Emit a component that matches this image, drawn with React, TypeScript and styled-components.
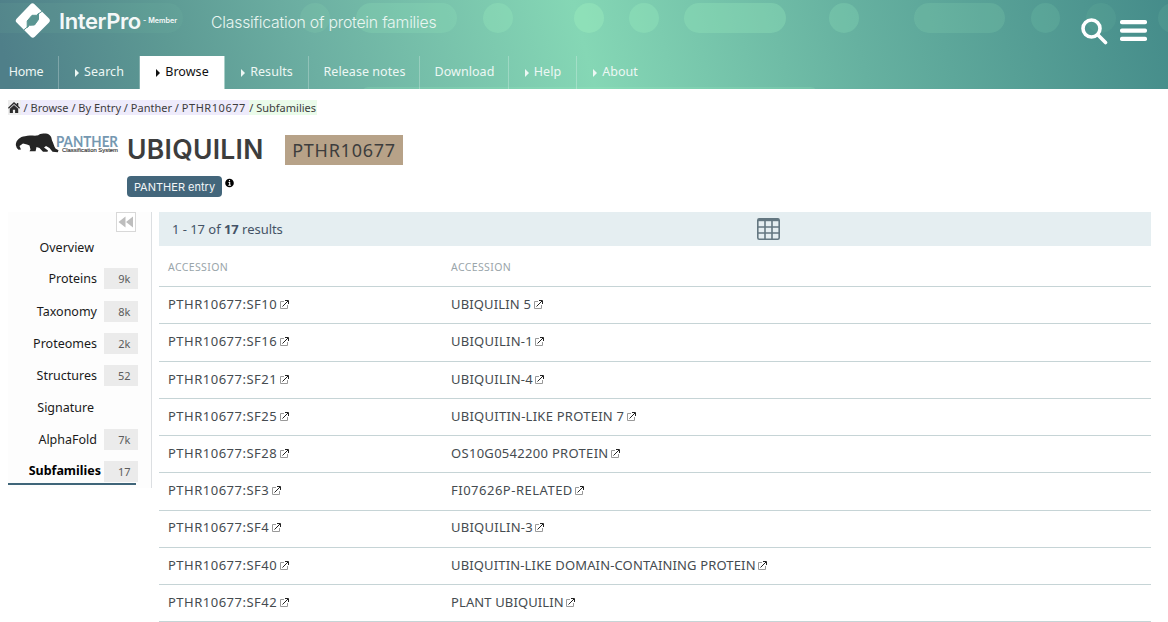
import React from "react";
import styled, { createGlobalStyle } from "styled-components";

const plex = `"Noto Sans", Roboto, sans-serif`;
const inter = `Inter, "Liberation Sans", sans-serif`;

const GlobalStyle = createGlobalStyle`
  * { box-sizing: border-box; }
  body { margin: 0; background: #fff; font-family: ${plex}; font-size: 13px; color: #3d3d3d; overflow: hidden; }
`;

const Page = styled.div`
  width: 1168px;
  height: 622px;
  overflow: hidden;
`;

const Header = styled.header`
  position: relative;
  height: 89px;
  overflow: hidden;
  display: flex;
  flex-direction: column;
  justify-content: space-between;
  background: linear-gradient(76deg, #4f7f89 1%, #5d9a94 15%, #6cafa2 27%, #85d7b5 50%, #66b1a0 73%, #458c8a 100%);
`;

const Pattern = styled.svg`
  position: absolute;
  inset: 0;
`;

const Banner = styled.div`
  position: relative;
  display: flex;
  align-items: flex-start;
  height: 56px;
  padding: 3px 21px 0 15px;
`;

const BrandName = styled.span`
  margin: 2px 0 0 8px;
  width: 84px;
  font: 600 22px/32px ${inter};
  letter-spacing: -0.4px;
  color: #f4f8f8;
`;

const BrandNote = styled.span`
  margin-top: 12px;
  width: 68px;
  font: 600 7.2px/12px ${inter};
  color: #f4f8f8;
  white-space: nowrap;
`;

const Tagline = styled.span`
  flex: 1;
  margin-top: 8px;
  font: 300 15.8px/24px ${inter};
  letter-spacing: -0.22px;
  color: #e9f6f1;
`;

const Tools = styled.div`
  display: flex;
  gap: 12px;
  margin-top: 15px;
`;

const Nav = styled.nav`
  position: relative;
  display: flex;
  height: 33px;
`;

const Tab = styled.a<{ $width: number; $active?: boolean; $last?: boolean; $first?: boolean }>`
  display: flex;
  align-items: center;
  justify-content: center;
  gap: 5px;
  width: ${(p) => p.$width}px;
  padding: 0 ${(p) => (p.$first ? 6 : 0)}px 2px ${(p) => (p.$first ? 0 : 1)}px;
  border-right: ${(p) => (p.$last ? "0" : "1px")} solid
    ${(p) => (p.$active ? "#a9cfc8" : "rgba(255, 255, 255, 0.25)")};
  background: ${(p) => (p.$active ? "#fff" : "transparent")};
  color: ${(p) => (p.$active ? "#111" : "#edf7f4")};
  font-size: 12.5px;
  letter-spacing: ${(p) => (p.$first ? "-0.3px" : "0.05px")};
  white-space: nowrap;
`;

const Caret = styled.i`
  border: 4px solid transparent;
  border-left: 4px solid currentColor;
  border-right: 0;
  margin-top: 2px;
`;

const Crumbs = styled.div`
  display: flex;
  align-items: center;
  height: 15px;
  margin: 11px 0 0 8px;
  font-size: 11px;
  line-height: 15px;
  white-space: pre;
`;

const Crumb = styled.span<{ $tone: string; $width: number }>`
  height: 15px;
  width: ${(p) => p.$width}px;
  background: ${(p) => p.$tone};
`;

const CrumbCode = styled.span`
  letter-spacing: 0.55px;
`;

const Hero = styled.section`
  display: flex;
  height: 97px;
  padding: 16px 0 0 15px;
`;

const HeroText = styled.div`
  margin-left: 8px;
`;

const TitleRow = styled.div`
  display: flex;
  align-items: center;
  gap: 20px;
  height: 36px;
`;

const Title = styled.h1`
  margin: 0;
  width: 138px;
  font: 600 26.5px/36px ${inter};
  letter-spacing: 0.28px;
  color: #3d3d3d;
`;

const AccessionTag = styled.span`
  height: 30px;
  width: 118px;
  margin-top: 2px;
  background: #b7a288;
  font-size: 18px;
  line-height: 30px;
  letter-spacing: 0.75px;
  text-align: center;
`;

const EntryRow = styled.div`
  display: flex;
  align-items: flex-start;
  gap: 3px;
  margin-top: 9px;
`;

const EntryTag = styled.span`
  height: 21px;
  width: 95px;
  border-radius: 4px;
  background: #43667b;
  color: #f3f6f8;
  text-align: center;
  font: 400 11px/22px ${inter};
`;

const Main = styled.main`
  display: flex;
  padding: 0 17px 0 8px;
`;

const Sidebar = styled.aside`
  display: flex;
  flex-direction: column;
  width: 144px;
  height: 276px;
  margin-right: 7px;
  border-right: 1px solid #dcdfe2;
  background: #fdfdfd;
`;

const Collapse = styled.button`
  display: flex;
  align-items: center;
  justify-content: center;
  align-self: flex-start;
  flex: none;
  width: 20px;
  height: 20px;
  margin: 0 0 0 108px;
  padding: 0;
  border: 1px solid #d8d8d8;
  background: #fff;
`;

const SideItem = styled.a<{ $h?: number }>`
  display: flex;
  flex: none;
  width: 130px;
  height: ${(p) => p.$h ?? 32}px;
  padding-top: 5px;
`;

const SideLabel = styled.span<{ $end: number; $active?: boolean }>`
  width: ${(p) => p.$end}px;
  margin-right: ${(p) => 96 - p.$end}px;
  padding-top: ${(p) => (p.$active ? 0 : 1)}px;
  line-height: 20px;
  text-align: right;
  font-size: 12.5px;
  font-weight: ${(p) => (p.$active ? 700 : 400)};
  color: ${(p) => (p.$active ? "#000" : "#1a1a1a")};
`;

const Count = styled.span`
  width: 34px;
  height: 21px;
  padding-right: 7.5px;
  background: #ebebeb;
  color: #5c5c5c;
  font-size: 11px;
  line-height: 22px;
  text-align: right;
`;

const ActiveLine = styled.div`
  width: 128px;
  height: 2px;
  margin-top: -5px;
  background: #3f6579;
`;

const Results = styled.section`
  flex: 1;
`;

const ResultBar = styled.div`
  display: flex;
  align-items: center;
  height: 34px;
  padding: 0 371px 0 13px;
  justify-content: space-between;
  background: #e5eef1;
  color: #445366;
  letter-spacing: -0.04px;
`;

const Row = styled.div`
  display: grid;
  grid-template-columns: 283px 1fr;
  align-items: center;
  height: 37.22px;
  padding: 0 0 2.3px 9px;
  border-bottom: 1px solid #c6d4d6;
  color: #454b50;
  font-size: 13px;
`;

const HeadRow = styled(Row)`
  height: 41.2px;
  padding-top: 5px;
  font-size: 10.5px;
  color: #9aa5aa;
`;

const Cell = styled.span<{ $track: number }>`
  display: flex;
  align-items: center;
  gap: 2.5px;
  white-space: nowrap;
  letter-spacing: ${(p) => p.$track}px;

  svg {
    margin-top: 1px;
  }
`;

const External = () => (
  <svg width="9" height="9" viewBox="0 0 9 9" fill="none">
    <path d="M4 1.500H.5V8.500H7.500V5" stroke="#999" />
    <path d="M2.500 6.500 8 1M5 .5H8.500V4" stroke="#222" />
  </svg>
);

const Logo = () => (
  <svg width="36" height="36" viewBox="0 0 36 36">
    <path
      d="M15.500 1.200q2-2 4 0L34 15.600q1.800 1.900 0 3.800L19.800 33.800q-2 1.900-4 0L1.600 19.600q-1.800-1.900 0-3.800Z"
      fill="#fff"
    />
    <path
      d="M17 12.300H21.500L23.500 10.500V16.500L19.500 22L14.500 22.300L12.200 24.500V18Z"
      fill="#5a9592"
      stroke="#5a9592"
      strokeLinejoin="round"
    />
    <path d="M22.500 11.500 27.500 8M13.500 23 9 26.800" stroke="#5a9592" />
  </svg>
);

const Panther = () => (
  <svg width="108" height="30" viewBox="0 -1 108 30" style={{ marginRight: -4 }}>
    <path
      d="M.8 13C1 8 5 4.600 10 4.200C14 2.800 18 4 22 3.600C24 3.200 24.500 1.600 27 1.700C30 1.300 33 1.600 34.500 3C36.500 4.500 36.500 6.500 37 8.500C38.500 11 39 14.500 40.500 16.500L43.500 18.300L42.800 20.300L37.500 19.800L34.500 16L31 14L29 15.500L33 18.600L32.500 19.800H28L24.500 16L21.500 15L20.600 19.300H14.500L15.500 17.500L14.500 13.500L12 12.500L8 11.500L4.500 14L6 17.500L3.500 17.800L1.800 16Z"
      fill="#252525"
    />
    <text x="41" y="14.500" textLength="62" fontFamily="Lato, sans-serif" fontWeight="700" fontSize="14.500" fill="#7598b1" lengthAdjust="spacingAndGlyphs">PANTHER</text>
    <text x="47" y="20.200" textLength="56" fontFamily="Liberation Sans, sans-serif" fontSize="5.800" fill="#333" stroke="#333" strokeWidth=".15" lengthAdjust="spacingAndGlyphs">Classification System</text>
  </svg>
);

const bubbles: [number, number, number][] = [
  [-40, 223, 0.06], [300, 30, 0.13], [356, 101, 0.2], [483, 30, 0.3], [574, 30, 0.48],
  [629, 30, 0.35], [684, 102, 0.3], [829, 30, 0.22], [914, 91, 0.15], [1031, 29, 0.12],
  [1086, 30, 0.07], [1158, 30, 0.09],
];

const tabs = [
  { label: "Home", width: 59, first: true },
  { label: "Search", width: 81, caret: true },
  { label: "Browse", width: 85, caret: true, active: true },
  { label: "Results", width: 84, caret: true },
  { label: "Release notes", width: 111 },
  { label: "Download", width: 89 },
  { label: "Help", width: 68, caret: true },
  { label: "About", width: 76, caret: true, last: true },
];

const side = [
  { label: "Overview", end: 86, h: 31 },
  { label: "Proteins", end: 89, count: "9k", h: 33 },
  { label: "Taxonomy", end: 89, count: "8k" },
  { label: "Proteomes", end: 89, count: "2k" },
  { label: "Structures", end: 89, count: "52" },
  { label: "Signature", end: 86 },
  { label: "AlphaFold", end: 89, count: "7k" },
  { label: "Subfamilies", end: 93, count: "17", active: true },
];

const rows: [string, string, number][] = [
  ["PTHR10677:SF10", "UBIQUILIN 5", 0.15],
  ["PTHR10677:SF16", "UBIQUILIN-1", 0.25],
  ["PTHR10677:SF21", "UBIQUILIN-4", 0.25],
  ["PTHR10677:SF25", "UBIQUITIN-LIKE PROTEIN 7", 0.25],
  ["PTHR10677:SF28", "OS10G0542200 PROTEIN", 0.3],
  ["PTHR10677:SF3", "FI07626P-RELATED", 0.5],
  ["PTHR10677:SF4", "UBIQUILIN-3", 0.25],
  ["PTHR10677:SF40", "UBIQUITIN-LIKE DOMAIN-CONTAINING PROTEIN", 0.15],
  ["PTHR10677:SF42", "PLANT UBIQUILIN", 0.12],
];

export default function App() {
  return (
    <Page>
      <GlobalStyle />
      <Header>
        <Pattern width="1168" height="89">
          {bubbles.map(([x, w, o]) => (
            <rect key={x} x={x} y="3" width={w} height="30" rx="15" fill="#98ebbd" opacity={o} />
          ))}
          <rect x="362" y="87" width="455" height="12" rx="6" fill="#98ebbd" opacity=".22" />
        </Pattern>
        <Banner>
          <Logo />
          <BrandName>InterPro</BrandName>
          <BrandNote>- Member</BrandNote>
          <Tagline>Classification of protein families</Tagline>
          <Tools>
            <svg width="27" height="27" viewBox="0 0 27 27" fill="none" stroke="#fff" strokeLinecap="round">
              <circle cx="10.500" cy="10.500" r="8.500" strokeWidth="3.600" />
              <path d="M17 17 24.500 24.500" strokeWidth="3.600" />
            </svg>
            <svg width="27" height="27" viewBox="0 0 27 27" fill="#fff">
              <rect y="2" width="27" height="4.300" rx="1.800" />
              <rect y="10.400" width="27" height="4.300" rx="1.800" />
              <rect y="18.800" width="27" height="4.300" rx="1.800" />
            </svg>
          </Tools>
        </Banner>
        <Nav>
          {tabs.map((t) => (
            <Tab key={t.label} $width={t.width} $active={t.active} $last={t.last} $first={t.first}>
              {t.caret && <Caret />}
              {t.label}
            </Tab>
          ))}
        </Nav>
      </Header>
      <Crumbs>
        <Crumb $tone="#ededed" $width={12.7}>
          <svg width="12" height="15" viewBox="0 0 12 15" fill="#2b2b2b">
            <path d="M6 2 0 7.800l.8.900L6 3.900l5.200 4.800.8-.9-1.700-1.700V3H8.800v1.600Z" />
            <path d="M6 4.900 1.800 8.700V13H4.900V9.800h2.200V13h3.100V8.700Z" />
          </svg>
        </Crumb>
        <Crumb $tone="#eeebfb" $width={228.6}>
          {" / Browse / By Entry / Panther / "}
          <CrumbCode>PTHR10677</CrumbCode>
        </Crumb>
        <Crumb $tone="#eafbea" $width={67.700}>/ Subfamilies</Crumb>
      </Crumbs>
      <Hero>
        <Panther />
        <HeroText>
          <TitleRow>
            <Title>UBIQUILIN</Title>
            <AccessionTag>PTHR10677</AccessionTag>
          </TitleRow>
          <EntryRow>
            <EntryTag>PANTHER entry</EntryTag>
            <svg width="9" height="14" viewBox="0 0 9 14">
              <circle cx="4.500" cy="7" r="4.300" fill="#000" />
              <path d="M4.500 4v1.300M3.500 6.500h1.200v2.800M3.300 9.300h2.600" stroke="#fff" strokeWidth="1.100" fill="none" />
            </svg>
          </EntryRow>
        </HeroText>
      </Hero>
      <Main>
        <Sidebar>
          <Collapse>
            <svg width="16" height="12" viewBox="0 0 16 12" fill="#bdbdbd">
              <path d="M7.500 .5v11L.5 6ZM15 .5v11L8 6Z" />
            </svg>
          </Collapse>
          {side.map((s) => (
            <SideItem key={s.label} $h={s.h}>
              <SideLabel $end={s.end} $active={s.active}>{s.label}</SideLabel>
              {s.count && <Count>{s.count}</Count>}
            </SideItem>
          ))}
          <ActiveLine />
        </Sidebar>
        <Results>
          <ResultBar>
            <span>1 - 17 of <b>17</b> results</span>
            <svg width="23" height="22" viewBox="0 0 23 22" fill="none" stroke="#647781">
              <rect x=".8" y=".8" width="21.400" height="20.400" rx="1.500" strokeWidth="1.600" />
              <path d="M1 2H22" strokeWidth="2.400" />
              <path d="M1 9H22M1 15H22M8 2V21M15 2V21" strokeWidth="1.600" />
            </svg>
          </ResultBar>
          <HeadRow>
            <Cell $track={0.38}>ACCESSION</Cell>
            <Cell $track={0.38}>ACCESSION</Cell>
          </HeadRow>
          {rows.map(([acc, name, track]) => (
            <Row key={acc}>
              <Cell $track={0.5}>{acc}<External /></Cell>
              <Cell $track={track}>{name}<External /></Cell>
            </Row>
          ))}
        </Results>
      </Main>
    </Page>
  );
}
